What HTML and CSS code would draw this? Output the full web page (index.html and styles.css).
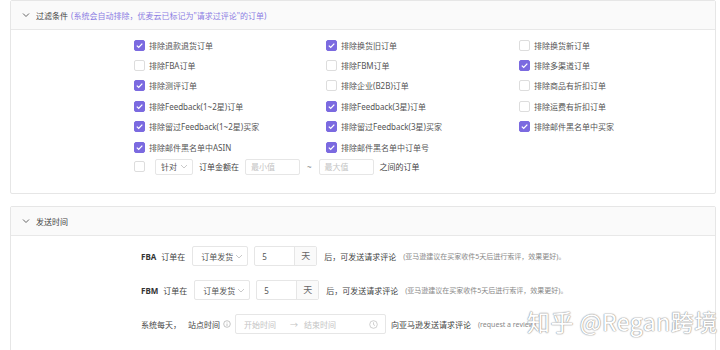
FILE: index.html
```html
<!DOCTYPE html>
<html>
<head>
  <title>评论设置</title>
  <link rel="stylesheet" href="styles.css">
</head>
<body>
  <div class="panel">
    <div class="panel-header">
      <svg class="arrow" width="8" height="6" viewBox="0 0 8 6"><polyline points="1,1.5 4,4.5 7,1.5" fill="none" stroke="#666" stroke-width="1"/></svg>
      <span class="panel-title">过滤条件</span>
      <span class="panel-tip">(系统会自动排除，优麦云已标记为"请求过评论"的订单)</span>
    </div>
    <div class="panel-body filter-body">
      <div class="filter-grid">
        <label class="check-item"><span class="box checked"></span>排除退款退货订单</label>
        <label class="check-item"><span class="box checked"></span>排除换货旧订单</label>
        <label class="check-item"><span class="box"></span>排除换货新订单</label>

        <label class="check-item"><span class="box"></span>排除FBA订单</label>
        <label class="check-item"><span class="box"></span>排除FBM订单</label>
        <label class="check-item"><span class="box checked"></span>排除多渠道订单</label>

        <label class="check-item"><span class="box checked"></span>排除测评订单</label>
        <label class="check-item"><span class="box"></span>排除企业(B2B)订单</label>
        <label class="check-item"><span class="box"></span>排除商品有折扣订单</label>

        <label class="check-item"><span class="box checked"></span>排除Feedback(1~2星)订单</label>
        <label class="check-item"><span class="box checked"></span>排除Feedback(3星)订单</label>
        <label class="check-item"><span class="box"></span>排除运费有折扣订单</label>

        <label class="check-item"><span class="box checked"></span>排除留过Feedback(1~2星)买家</label>
        <label class="check-item"><span class="box checked"></span>排除留过Feedback(3星)买家</label>
        <label class="check-item"><span class="box checked"></span>排除邮件黑名单中买家</label>

        <label class="check-item"><span class="box checked"></span>排除邮件黑名单中ASIN</label>
        <label class="check-item"><span class="box checked"></span>排除邮件黑名单中订单号</label>
        <span></span>
      </div>
      <div class="amount-row">
        <span class="box"></span>
        <div class="select select-small">针对<svg class="select-arrow" width="8" height="5" viewBox="0 0 8 5"><polyline points="1,1 4,4 7,1" fill="none" stroke="#bbb" stroke-width="0.8"/></svg></div>
        <span class="text">订单金额在</span>
        <div class="input input-amount">最小值</div>
        <span class="tilde">~</span>
        <div class="input input-amount">最大值</div>
        <span class="text">之间的订单</span>
      </div>
    </div>
  </div>

  <div class="panel">
    <div class="panel-header">
      <svg class="arrow" width="8" height="6" viewBox="0 0 8 6"><polyline points="1,1.5 4,4.5 7,1.5" fill="none" stroke="#666" stroke-width="1"/></svg>
      <span class="panel-title">发送时间</span>
    </div>
    <div class="panel-body send-body">
      <div class="send-row">
        <b class="channel">FBA</b>
        <span class="text">订单在</span>
        <div class="select select-mid">订单发货<svg class="select-arrow" width="8" height="5" viewBox="0 0 8 5"><polyline points="1,1 4,4 7,1" fill="none" stroke="#bbb" stroke-width="0.8"/></svg></div>
        <div class="input-group"><span class="input-num">5</span><span class="addon">天</span></div>
        <span class="text">后，可发送请求评论</span>
        <span class="note">(亚马逊建议在买家收件5天后进行索评，效果更好)。</span>
      </div>
      <div class="send-row">
        <b class="channel">FBM</b>
        <span class="text">订单在</span>
        <div class="select select-mid">订单发货<svg class="select-arrow" width="8" height="5" viewBox="0 0 8 5"><polyline points="1,1 4,4 7,1" fill="none" stroke="#bbb" stroke-width="0.8"/></svg></div>
        <div class="input-group"><span class="input-num">5</span><span class="addon">天</span></div>
        <span class="text">后，可发送请求评论</span>
        <span class="note">(亚马逊建议在买家收件5天后进行索评，效果更好)。</span>
      </div>
      <div class="send-row">
        <span class="text">系统每天，</span>
        <span class="text site">站点时间<svg class="info" width="8" height="8" viewBox="0 0 8 8"><circle cx="4" cy="4" r="3.3" fill="none" stroke="#aaa" stroke-width="0.7"/><line x1="4" y1="3.5" x2="4" y2="6" stroke="#aaa" stroke-width="0.7"/><circle cx="4" cy="2.3" r="0.4" fill="#aaa"/></svg></span>
        <div class="range">
          <span class="range-start">开始时间</span>
          <span class="range-sep">→</span>
          <span class="range-end">结束时间</span>
          <svg class="clock" width="9" height="9" viewBox="0 0 9 9"><circle cx="4.5" cy="4.5" r="3.8" fill="none" stroke="#bbb" stroke-width="0.7"/><polyline points="4.5,2.3 4.5,4.6 6,5.6" fill="none" stroke="#bbb" stroke-width="0.7"/></svg>
        </div>
        <span class="text">向亚马逊发送请求评论</span>
        <span class="note">(request a review)</span>
      </div>
    </div>
  </div>

  <div class="watermark">知乎 @Regan跨境</div>
</body>
</html>
```

FILE: styles.css
```css
body {
  margin: 0;
  background-color: #FFFFFF;
  font-family: "Noto Sans", "Noto Sans CJK SC", sans-serif;
  font-size: 8px;
  color: #555555;
  position: relative;
  height: 350px;
  overflow: hidden;
}

.panel {
  width: 704px;
  margin: 0 0 12px 10px;
  border: 1px solid #E6E6E6;
  border-radius: 2px;
  background-color: #FFFFFF;
}

.panel-header {
  display: flex;
  align-items: center;
  height: 28px;
  padding-left: 11px;
  background-color: #FAFAFA;
  border-bottom: 1px solid #E8E8E8;
}

.arrow {
  margin-right: 6px;
}

.panel-title {
  font-size: 8px;
  color: #444444;
}

.panel-tip {
  margin-left: 3px;
  color: #8B7DE3; /* Purple */
  font-size: 8px;
}

.filter-body {
  padding: 5px 0 18px 123px;
}

.filter-grid {
  display: grid;
  grid-template-columns: 192px 193px 180px;
  grid-auto-rows: 20.4px;
}

.check-item {
  display: flex;
  align-items: center;
  white-space: nowrap;
}

.box {
  box-sizing: border-box;
  width: 11px;
  height: 11px;
  margin-right: 4px;
  border: 1px solid #DDDDDD;
  border-radius: 2px;
  background-color: #FFFFFF;
  flex-shrink: 0;
}

.box.checked {
  border-color: #7B6AE0;
  background-color: #7B6AE0; /* Purple */
  background-image: url("data:image/svg+xml;utf8,<svg xmlns='http://www.w3.org/2000/svg' width='11' height='11' viewBox='0 0 11 11'><polyline points='2.8,5.6 4.7,7.4 8.3,3.6' fill='none' stroke='white' stroke-width='1.3'/></svg>");
  background-position: -1px -1px;
}

.amount-row {
  display: flex;
  align-items: center;
  height: 17px;
  margin-top: 1px;
}

.amount-row .box {
  margin-right: 10px;
}

.select,
.input,
.range,
.input-group {
  box-sizing: border-box;
  display: flex;
  align-items: center;
  border: 1px solid #E6E6E6;
  border-radius: 2px;
  background-color: #FFFFFF;
}

.select-small {
  width: 38px;
  height: 16px;
  padding-left: 5px;
  color: #555555;
}

.select-arrow {
  margin-left: auto;
  margin-right: 4px;
}

.amount-row .text {
  margin: 0 6px;
  color: #444444;
}

.input-amount {
  width: 55px;
  height: 16px;
  padding-left: 5px;
  color: #C4C4C4;
}

.tilde {
  margin: 0 7px;
  color: #888888;
}

.send-body {
  padding: 10px 0 30px 130px;
}

.send-row {
  display: flex;
  align-items: center;
  height: 20px;
  margin-bottom: 14px;
  white-space: nowrap;
}

.channel {
  color: #333333;
  font-size: 8px;
  margin-right: 5px;
}

.send-row .text {
  color: #444444;
  margin-right: 7px;
}

.select-mid {
  width: 56px;
  height: 20px;
  padding-left: 8px;
  margin-right: 6px;
  color: #555555;
}

.input-group {
  height: 20px;
  margin-right: 7px;
}

.input-num {
  width: 39px;
  padding-left: 7px;
  box-sizing: border-box;
  color: #555555;
}

.addon {
  width: 21px;
  height: 18px;
  line-height: 18px;
  text-align: center;
  border-left: 1px solid #E6E6E6;
  background-color: #FAFAFA;
  color: #666666;
  font-size: 9px;
}

.note {
  color: #888888;
  font-size: 7px;
}

.send-row .site {
  display: flex;
  align-items: center;
  margin-right: 4px;
}

.info {
  margin-left: 3px;
}

.range {
  width: 151px;
  height: 20px;
  padding-left: 8px;
  margin-right: 5px;
  color: #C4C4C4;
}

.range-sep {
  margin: 0 6px 0 14px;
}

.clock {
  margin-left: auto;
  margin-right: 7px;
}

.watermark {
  position: absolute;
  left: 527px;
  top: 304px;
  font-family: "Noto Sans CJK SC", "Noto Sans", sans-serif;
  font-size: 23px;
  letter-spacing: 0.5px;
  color: #FFFFFF;
  text-shadow: 0 0 1px #999999, 0 0 1px #999999, 0 0 2px #BBBBBB;
  white-space: nowrap;
}
```
